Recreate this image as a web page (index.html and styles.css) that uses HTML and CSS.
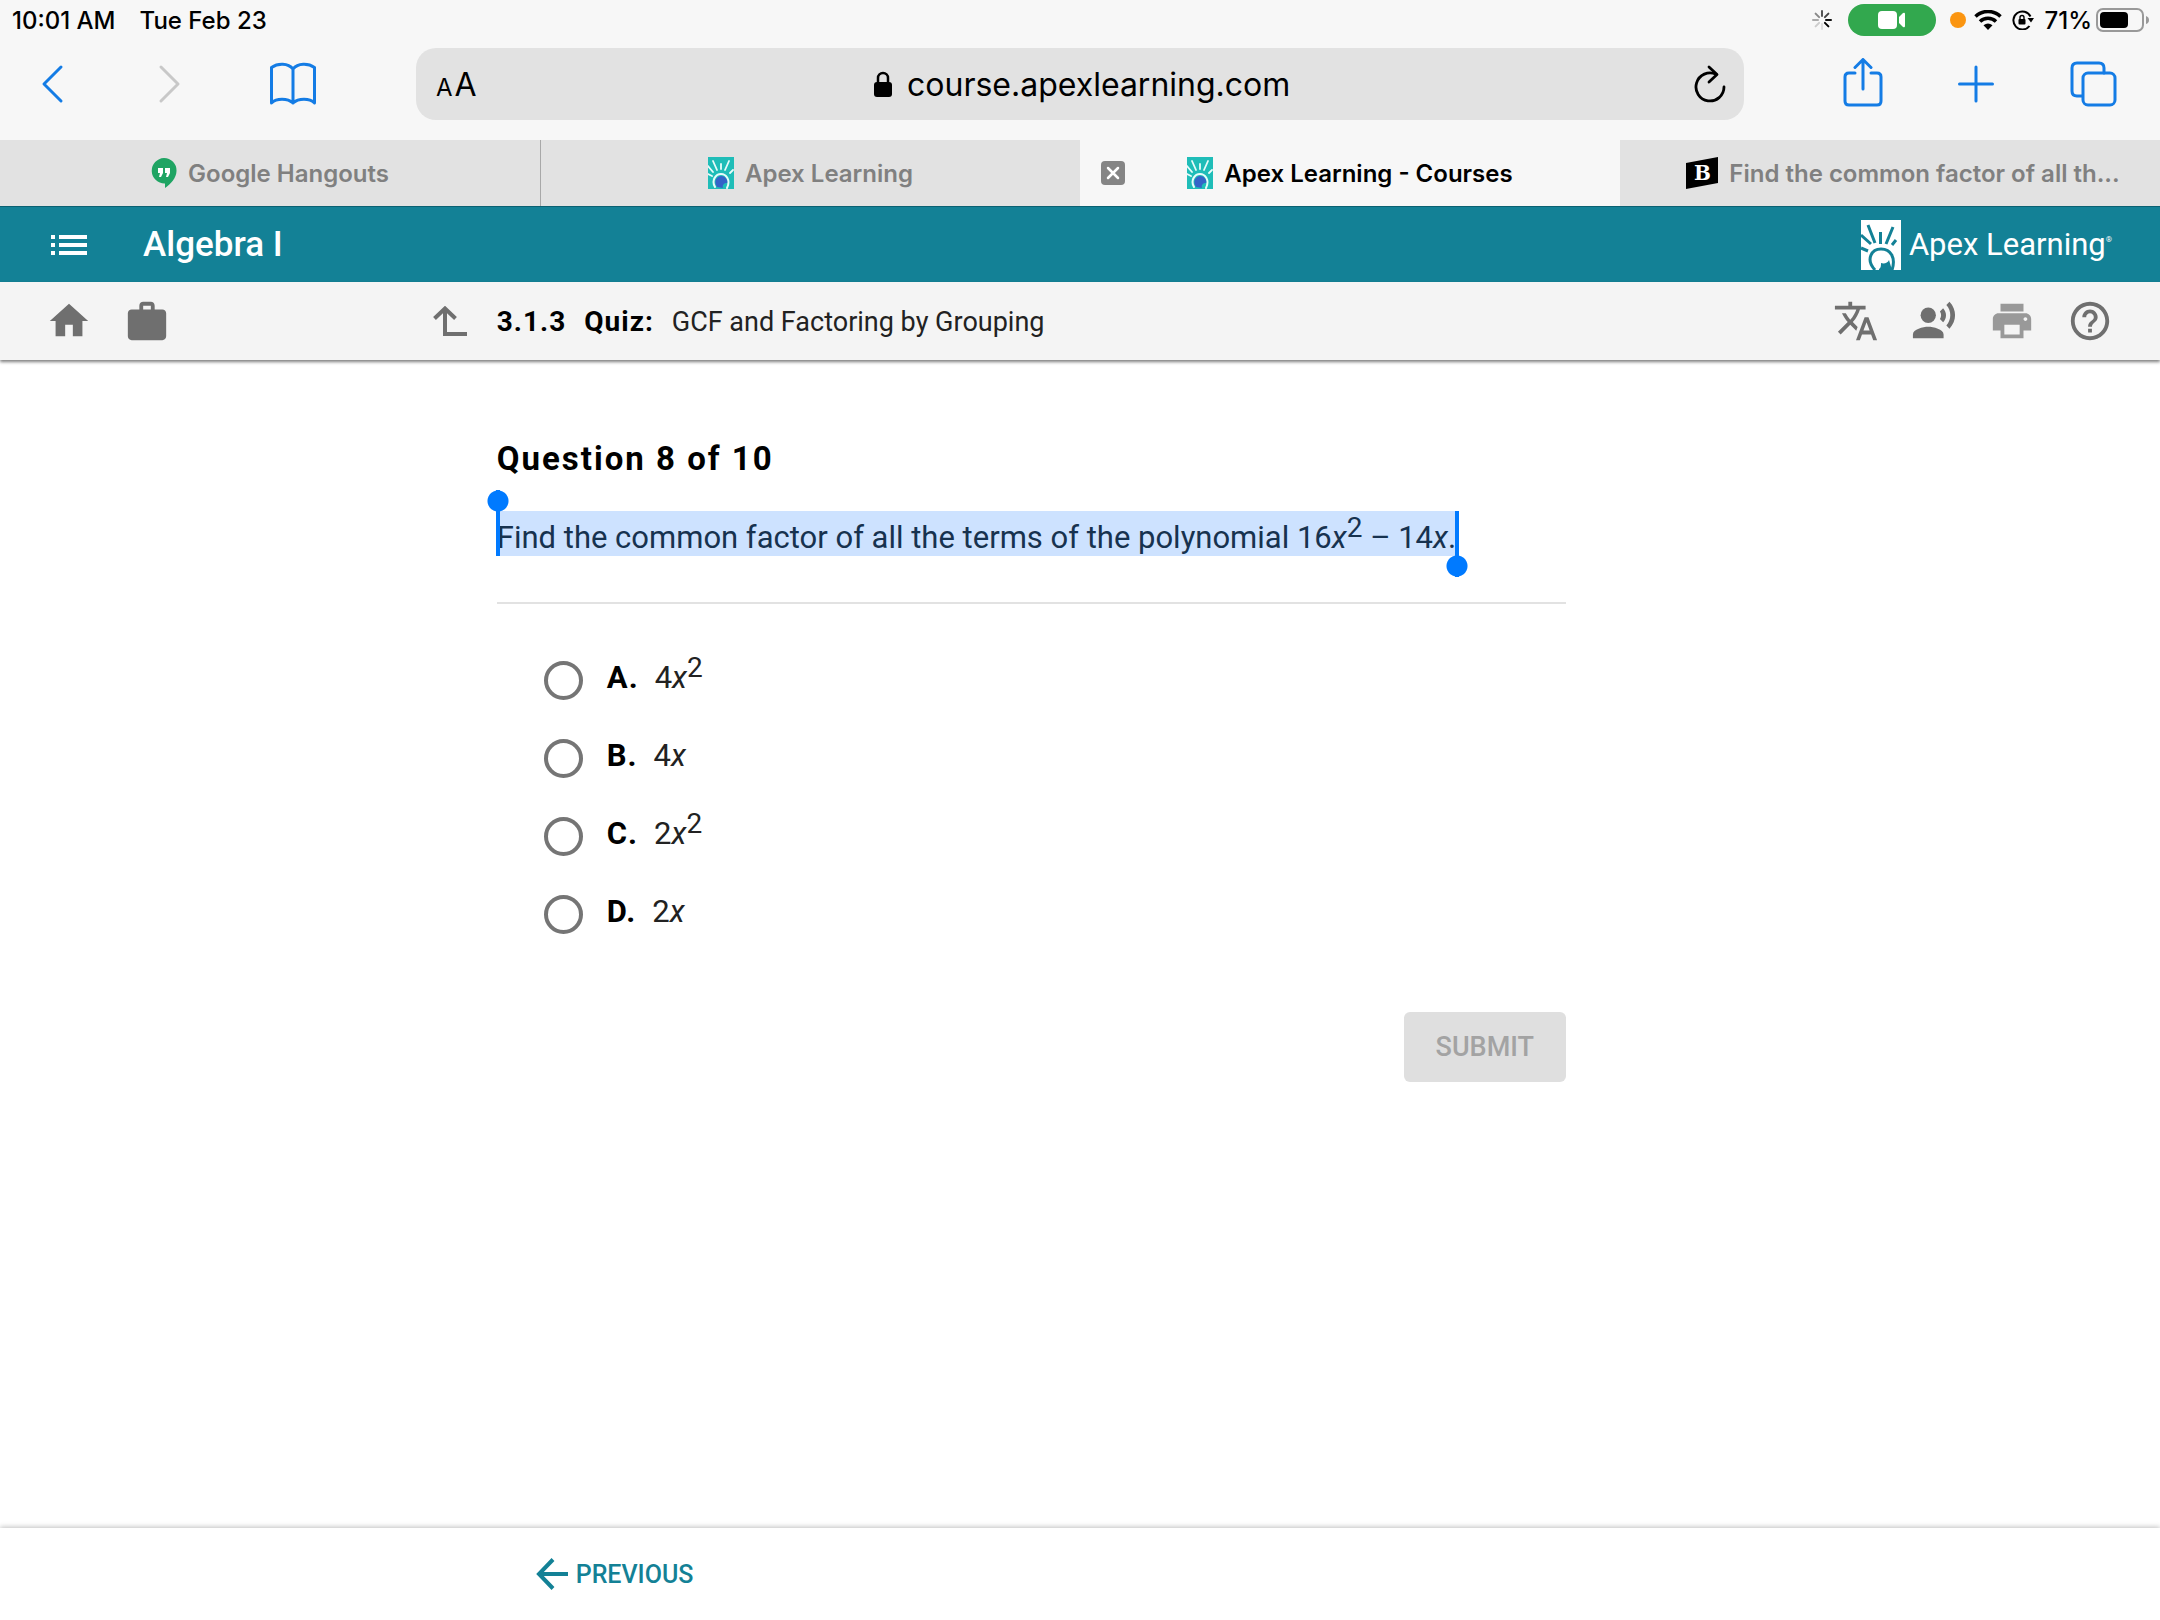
FILE: index.html
```html
<!DOCTYPE html>
<html lang="en">
<head>
    <meta charset="UTF-8">
    <meta name="viewport" content="width=device-width, initial-scale=1.0">
    <title>Apex Learning - Courses</title>
    <link rel="stylesheet" href="styles.css">
</head>
<body>
    <!-- shared symbols -->
    <svg class="symbols" aria-hidden="true">
        <symbol id="favicon" viewBox="0 0 26 32">
            <rect width="26" height="32" fill="#1fbdb8"/>
            <g stroke="#e8fbfa" stroke-width="1.8" stroke-linecap="round" fill="none">
                <path d="M5 4l4 9M13 7v5M21 4l-4 9M0 9l5 6M0 17l4 2M25 13l-3 3"/>
                <path d="M7 30c-4-7 1-13 6-13s10 6 6 14" stroke-width="2"/>
            </g>
            <path d="M9 30c-4-6 0-11 4-11 5 0 7 5 6 7-3 0-5 2-4 5z" fill="#3463c8"/>
        </symbol>
    </svg>

    <div class="browser">
        <div class="status">
            <span>10:01 AM</span>
            <span>Tue Feb 23</span>
            <div class="status-right">
                <svg class="spinner" viewBox="0 0 20 20" stroke-width="2" stroke-linecap="round">
                    <path d="M10 1v5" stroke="#555"/>
                    <path d="M16.400 3.600l-3.500 3.500" stroke="#444"/>
                    <path d="M19 10h-5" stroke="#111"/>
                    <path d="M16.400 16.400l-3.500-3.500" stroke="#000"/>
                    <path d="M10 19v-5" stroke="#ddd"/>
                    <path d="M3.600 16.400l3.500-3.500" stroke="#ccc"/>
                    <path d="M1 10h5" stroke="#aaa"/>
                    <path d="M3.600 3.600l3.500 3.500" stroke="#888"/>
                </svg>
                <span class="camera">
                    <svg width="28" height="18" viewBox="0 0 28 18" fill="#fff">
                        <rect width="19" height="18" rx="4"/>
                        <path d="M21 6l4-4q2-1 2 1v12q0 2-2 1l-4-4z"/>
                    </svg>
                </span>
                <span class="dot"></span>
                <svg class="wifi" viewBox="0 0 28 20" fill="none" stroke="#000">
                    <path d="M1.500 6.500a18 18 0 0 1 25 0" stroke-width="3.500"/>
                    <path d="M6 11.500a11.500 11.500 0 0 1 16 0" stroke-width="3.500"/>
                    <path d="M14 20l-4.500-4.800q4.500-3.400 9 0z" fill="#000" stroke="none"/>
                </svg>
                <svg class="rotation" viewBox="0 0 22 20" fill="none" stroke="#000" stroke-width="2">
                    <path d="M18.500 6.500a9 9 0 1 0-1 9.500"/>
                    <path d="M15.500 8h6.500l-3 4.500z" fill="#000" stroke="none"/>
                    <rect x="6.500" y="9" width="7" height="5.500" rx="1" fill="#000" stroke="none"/>
                    <path d="M8 9.500v-2a2 2 0 0 1 4 0v2" stroke-width="1.400"/>
                </svg>
                <span class="percent">71%</span>
                <svg class="battery" viewBox="0 0 54 24">
                    <rect x="1" y="1" width="46" height="22" rx="6" fill="none" stroke="#999" stroke-width="2"/>
                    <rect x="4" y="4" width="28" height="16" rx="4"/>
                    <path d="M50 8q3 1 3 4t-3 4z" fill="#999"/>
                </svg>
            </div>
        </div>

        <div class="toolbar">
            <div class="toolbar-left">
                <button class="tool" aria-label="Back">
                    <svg width="36" height="48" viewBox="0 0 36 48"><path d="M26 7L9 24l17 17"/></svg>
                </button>
                <button class="tool off" aria-label="Forward" disabled>
                    <svg width="36" height="48" viewBox="0 0 36 48"><path d="M9 7l17 17L9 41"/></svg>
                </button>
                <button class="tool" aria-label="Bookmarks">
                    <svg width="48" height="48" viewBox="0 0 48 48"><path d="M24 9C19 3 9 3 2.500 7.500V43c5-5 16-5 21.500 0 5.500-5 16.500-5 21.500 0V7.500C39 3 29 3 24 9zv34"/></svg>
                </button>
            </div>
            <div class="address">
                <button class="reader" aria-label="Reader options"><small>A</small>A</button>
                <div class="site">
                    <svg width="20" height="28" viewBox="0 0 20 28">
                        <rect x="1" y="12" width="18" height="15" rx="3"/>
                        <path d="M5 13V8a5 5 0 0 1 10 0v5" fill="none" stroke="#000" stroke-width="2.500"/>
                    </svg>
                    <input type="text" value="course.apexlearning.com" aria-label="Address">
                </div>
                <button class="reload" aria-label="Reload">
                    <svg width="32" height="38" viewBox="0 0 32 38" fill="none" stroke="#000" stroke-width="2.800" stroke-linecap="round" stroke-linejoin="round">
                        <path d="M30 22a14 14 0 1 1-8-12.700"/>
                        <path d="M15 2l8 7.500-8 7.500"/>
                    </svg>
                </button>
            </div>
            <div class="toolbar-right">
                <button class="tool" aria-label="Share">
                    <svg width="40" height="52" viewBox="0 0 40 52"><path d="M12 15H6q-4 0-4 4v24q0 4 4 4h28q4 0 4-4V19q0-4-4-4h-6M20 31V2M12 9.500L20 1.500l8 8"/></svg>
                </button>
                <button class="tool" aria-label="New tab">
                    <svg width="36" height="48" viewBox="0 0 36 48"><path d="M18 7v34M1.500 24h33"/></svg>
                </button>
                <button class="tool" aria-label="Show tabs">
                    <svg width="48" height="48" viewBox="0 0 48 48"><path d="M13 36H8q-5 0-5-5V8q0-5 5-5h22q5 0 5 5v5"/><rect x="14" y="13" width="32" height="32" rx="5"/></svg>
                </button>
            </div>
        </div>

        <div class="tabs">
            <a class="tab" href="#">
                <svg width="26" height="32" viewBox="0 0 26 32">
                    <path d="M13 1a12.500 12.500 0 0 1 12.500 13c0 7-6 13-11.500 17v-4.500A12.500 12.500 0 1 1 13 1z" fill="#1fa463"/>
                    <path d="M7 11h5v5l-2 4H8l1-4H7zM14 11h5v5l-2 4h-2l1-4h-2z" fill="#fff"/>
                </svg>
                <span>Google Hangouts</span>
            </a>
            <a class="tab" href="#">
                <svg width="26" height="32"><use href="#favicon"/></svg>
                <span>Apex Learning</span>
            </a>
            <div class="tab active">
                <button class="close" aria-label="Close tab">
                    <svg width="24" height="24" viewBox="0 0 24 24"><rect width="24" height="24" rx="4" fill="#858585"/><path d="M7 7l10 10M17 7L7 17" stroke="#fff" stroke-width="2.500" stroke-linecap="round"/></svg>
                </button>
                <svg width="26" height="32"><use href="#favicon"/></svg>
                <span>Apex Learning - Courses</span>
            </div>
            <a class="tab" href="#">
                <svg width="32" height="32" viewBox="0 0 32 32">
                    <path d="M0 6L32 0v26L0 32z"/>
                    <text class="brand-letter" x="8" y="23">B</text>
                </svg>
                <span>Find the common factor of all th...</span>
            </a>
        </div>
    </div>

    <header class="course">
        <button class="menu" aria-label="Course menu">
            <svg width="36" height="20" viewBox="0 0 36 20" fill="#fff"><path d="M0 0h4v4H0zM8 0h28v4H8zM0 8h4v4H0zM8 8h28v4H8zM0 16h4v4H0zM8 16h28v4H8z"/></svg>
        </button>
        <h1>Algebra I</h1>
        <a class="logo" href="#">
            <svg width="40" height="50" viewBox="0 0 40 50">
                <rect width="40" height="50" fill="#fff"/>
                <g fill="none" stroke="#138196" stroke-width="3">
                    <path d="M7 5l7 18M19.500 12v12M32 7l-7 17M0 15l10 9M0 28l7 3M35 20l-4 5"/>
                    <path d="M14 50C4 39 11 29 20 29c10 0 15 9 11 21"/>
                </g>
                <path d="M18 49c2-1 2-4 2-6 3 1 7 0 8-3l3 10H18z" fill="#138196"/>
            </svg>
            <span>Apex Learning</span><sup>®</sup>
        </a>
    </header>

    <nav class="activity">
        <div class="activity-left">
            <a href="#" aria-label="Home"><svg class="icon" viewBox="0 0 24 24"><path d="M10 20v-6h4v6h5v-8h3L12 3 2 12h3v8z"/></svg></a>
            <a href="#" aria-label="Portfolio"><svg class="icon" viewBox="0 0 24 24"><path d="M20 6h-4V4c0-1.110-.89-2-2-2h-4c-1.110 0-2 .89-2 2v2H4c-1.110 0-2 .89-2 2v12c0 1.110.89 2 2 2h16c1.110 0 2-.89 2-2V8c0-1.110-.89-2-2-2zm-6 0h-4V4h4v2z"/></svg></a>
            <a class="up" href="#" aria-label="Up one level"><svg width="34" height="30" viewBox="0 0 34 30" fill="none" stroke="#6f6f6f" stroke-width="4"><path d="M1.500 12.500L12 2.500l10.500 10M12 3v25h22"/></svg></a>
        </div>
        <p><b>3.1.3</b><b>Quiz:</b>GCF and Factoring by Grouping</p>
        <div class="activity-right">
            <button aria-label="Translate"><svg class="icon" viewBox="0 0 24 24"><path d="M12.870 15.070l-2.540-2.510.03-.03c1.740-1.940 2.980-4.170 3.710-6.530H17V4h-7V2H8v2H1v1.990h11.170C11.500 7.920 10.440 9.750 9 11.350 8.070 10.320 7.300 9.190 6.690 8h-2c.73 1.630 1.730 3.170 2.980 4.560l-5.090 5.020L4 19l5-5 3.110 3.110.76-2.040zM18.500 10h-2L12 22h2l1.120-3h4.750L21 22h2l-4.500-12zm-2.620 7l1.620-4.330L19.120 17h-3.240z"/></svg></button>
            <button aria-label="Read aloud"><svg class="icon" viewBox="0 0 24 24"><circle cx="9" cy="9" r="4"/><path d="M9 15c-2.670 0-8 1.340-8 4v2h16v-2c0-2.660-5.330-4-8-4zm7.760-9.640l-1.680 1.690c.84 1.180.84 2.710 0 3.890l1.680 1.690c2.020-2.020 2.020-5.070 0-7.270zM20.070 2l-1.630 1.630c2.770 3.020 2.770 7.560 0 10.740L20.070 16c3.900-3.890 3.910-9.950 0-14z"/></svg></button>
            <button class="faded" aria-label="Print"><svg class="icon" viewBox="0 0 24 24"><path d="M19 8H5c-1.660 0-3 1.340-3 3v6h4v4h12v-4h4v-6c0-1.660-1.340-3-3-3zm-3 11H8v-5h8v5zm3-7c-.55 0-1-.45-1-1s.45-1 1-1 1 .45 1 1-.45 1-1 1zm-1-9H6v4h12V3z"/></svg></button>
            <button aria-label="Help"><svg class="icon" viewBox="0 0 24 24"><path d="M11 18h2v-2h-2v2zm1-16C6.480 2 2 6.480 2 12s4.480 10 10 10 10-4.480 10-10S17.520 2 12 2zm0 18c-4.410 0-8-3.590-8-8s3.590-8 8-8 8 3.590 8 8-3.590 8-8 8zm0-14c-2.210 0-4 1.790-4 4h2c0-1.100.9-2 2-2s2 .9 2 2c0 2-3 1.750-3 5h2c0-2.250 3-2.500 3-5 0-2.210-1.790-4-4-4z"/></svg></button>
        </div>
    </nav>

    <main>
        <h2>Question 8 of 10</h2>
        <p class="question"><span class="selected">Find the common factor of all the terms of the polynomial 16<i>x</i><sup>2</sup> – 14<i>x</i>.</span></p>
        <hr>
        <form>
            <div class="option">
                <input type="radio" name="answer" id="answerA">
                <label for="answerA"><b>A.</b>4<i>x</i><sup>2</sup></label>
            </div>
            <div class="option">
                <input type="radio" name="answer" id="answerB">
                <label for="answerB"><b>B.</b>4<i>x</i></label>
            </div>
            <div class="option">
                <input type="radio" name="answer" id="answerC">
                <label for="answerC"><b>C.</b>2<i>x</i><sup>2</sup></label>
            </div>
            <div class="option">
                <input type="radio" name="answer" id="answerD">
                <label for="answerD"><b>D.</b>2<i>x</i></label>
            </div>
            <button class="submit" type="submit" disabled>SUBMIT</button>
        </form>
    </main>

    <footer>
        <a href="#">
            <svg width="32" height="32" viewBox="0 0 32 32" fill="none" stroke="#138196" stroke-width="4"><path d="M17 1.500L3 16l14 14.500M3 16h29"/></svg>
            <span>PREVIOUS</span>
        </a>
    </footer>
</body>
</html>
```
FILE: styles.css
```css
* {
    box-sizing: border-box;
}
body {
    display: flex;
    flex-direction: column;
    min-height: 100vh;
    margin: 0;
    background-color: #fff;
    color: #222;
    font-family: Roboto, "Liberation Sans", sans-serif;
}
button {
    padding: 0;
    border: none;
    background: none;
    color: inherit;
    font-family: inherit;
}
a {
    color: inherit;
    text-decoration: none;
}
svg {
    display: block;
    flex: none;
}
h1, h2, p {
    margin: 0;
}
sup {
    font-size: 28px;
    line-height: 0;
}
.symbols {
    position: absolute;
    width: 0;
    height: 0;
}

/* browser chrome */
.browser {
    background-color: #f7f7f7;
    color: #000;
    font-family: Inter, "Liberation Sans", sans-serif;
}
.status {
    display: flex;
    align-items: center;
    gap: 24px;
    height: 40px;
    padding: 0 10px 0 12px;
    font-size: 24px;
    font-weight: 500;
}
.status-right {
    display: flex;
    align-items: center;
    margin-left: auto;
}
.spinner {
    width: 20px;
    height: 20px;
    margin-right: 16px;
}
.camera {
    display: flex;
    align-items: center;
    justify-content: center;
    width: 88px;
    height: 32px;
    border-radius: 16px;
    background-color: #32a84e;
}
.dot {
    width: 16px;
    height: 16px;
    margin: 0 8px 0 14px;
    border-radius: 50%;
    background-color: #fb9510;
}
.wifi {
    width: 28px;
    height: 20px;
}
.rotation {
    width: 22px;
    height: 20px;
    margin: 0 10px;
}
.percent {
    margin-right: 4px;
}
.battery {
    width: 54px;
    height: 24px;
}
.toolbar {
    display: grid;
    grid-template-columns: 416px 1fr 416px;
    align-items: center;
    height: 100px;
    padding-bottom: 12px;
}
.toolbar-left,
.toolbar-right {
    display: flex;
    align-items: center;
}
.toolbar-left {
    gap: 81px;
    padding-left: 35px;
}
.toolbar-right {
    justify-content: flex-end;
    gap: 75px;
    padding-right: 43px;
}
.tool svg {
    fill: none;
    stroke: #147ce5;
    stroke-width: 3;
    stroke-linecap: round;
    stroke-linejoin: round;
}
.off svg {
    stroke: #c8c8c8;
}
.address {
    display: grid;
    grid-template-columns: 1fr auto 1fr;
    align-items: center;
    height: 72px;
    padding: 0 18px 0 20px;
    border-radius: 20px;
    background-color: #e2e2e2;
}
.reader {
    justify-self: start;
    font-size: 32px;
}
.reader small {
    margin-right: 2px;
    font-size: 24px;
}
.site {
    display: flex;
    align-items: center;
    gap: 14px;
}
.site input {
    width: 382px;
    padding: 0;
    border: none;
    background: none;
    font-family: inherit;
    font-size: 32px;
}
.reload {
    justify-self: end;
}
.tabs {
    display: grid;
    grid-template-columns: repeat(4, 1fr);
}
.tab {
    position: relative;
    display: flex;
    align-items: center;
    justify-content: center;
    gap: 11px;
    height: 66px;
    background-color: #e2e2e2;
    color: #808080;
    font-size: 24px;
    font-weight: 600;
    white-space: nowrap;
}
.tab:nth-child(2) {
    border-left: 1px solid #a8a8a8;
}
.tab:last-child {
    padding-left: 26px;
}
.tab.active {
    background-color: #f7f7f7;
    color: #000;
}
.close {
    position: absolute;
    left: 21px;
}
.brand-letter {
    fill: #fff;
    font-family: "DejaVu Serif", serif;
    font-size: 20px;
    font-weight: bold;
}

/* course header */
.course {
    display: flex;
    align-items: center;
    height: 76px;
    padding: 0 48px 0 51px;
    border-top: 1px solid #0b6172;
    background-color: #138196;
    color: #fff;
}
.course h1 {
    margin-left: 56px;
    font-size: 35px;
    font-weight: 500;
}
.logo {
    display: flex;
    align-items: center;
    margin-left: auto;
    font-size: 31px;
}
.logo span {
    margin-left: 8px;
}
.logo sup {
    align-self: flex-start;
    padding-top: 20px;
    font-size: 8px;
}

/* activity bar */
.activity {
    display: grid;
    grid-template-columns: 23% 1fr auto;
    align-items: center;
    height: 78px;
    background-color: #f4f4f4;
    box-shadow: 0 2px 3px rgba(0, 0, 0, 0.5);
}
.activity-left {
    display: flex;
    align-items: center;
    gap: 32px;
    padding: 0 30px 0 46px;
}
.up {
    margin-left: auto;
}
.activity p {
    font-size: 27px;
}
.activity b {
    margin-right: 18px;
    color: #000;
    font-size: 28px;
    letter-spacing: 1px;
}
.activity-right {
    display: flex;
    gap: 32px;
    padding-right: 47px;
}
.icon {
    width: 46px;
    height: 46px;
    fill: #6f6f6f;
}
.faded .icon {
    fill: #999;
}

/* question */
main {
    flex: 1;
    padding: 79px 27.5% 0 23%;
}
h2 {
    color: #000;
    font-size: 33px;
    line-height: 40px;
    letter-spacing: 2px;
}
.question {
    margin: 32px 0 46px;
    font-size: 31px;
    line-height: 37px;
}
.selected {
    position: relative;
    display: inline-block;
    padding: 8px 2px 0 0;
    background-color: #cde2ff;
    color: #17324f;
}
.selected::before,
.selected::after {
    content: "";
    position: absolute;
    width: 22px;
    height: 66px;
    background:
        radial-gradient(circle at center 11px, #007aff 10px, transparent 11px),
        linear-gradient(#007aff, #007aff) center / 4px 100% no-repeat;
}
.selected::before {
    left: -10px;
    bottom: 0;
}
.selected::after {
    top: 0;
    right: -10px;
    transform: rotate(180deg);
}
hr {
    height: 2px;
    margin: 0;
    border: none;
    background-color: #e2e2e2;
}
form {
    display: flex;
    flex-direction: column;
    gap: 32px;
    padding-top: 53px;
}
.option {
    display: flex;
    align-items: center;
    gap: 24px;
    height: 46px;
    padding-left: 47px;
}
.option input {
    appearance: none;
    width: 39px;
    height: 39px;
    margin: 0;
    border: 4px solid #757575;
    border-radius: 50%;
}
.option label {
    padding-bottom: 5px;
    font-size: 31px;
}
.option b {
    margin-right: 16px;
    color: #000;
    letter-spacing: 1px;
}
.submit {
    align-self: flex-end;
    height: 70px;
    margin-top: 43px;
    padding: 0 32px;
    border-radius: 6px;
    background-color: #dfdfdf;
    color: #a3a3a3;
    font-size: 27px;
    font-weight: 500;
}

/* bottom navigation */
footer {
    display: flex;
    align-items: center;
    height: 92px;
    padding-left: 24.8%;
    box-shadow: 0 -1px 5px rgba(0, 0, 0, 0.25);
    color: #138196;
    font-size: 25px;
    font-weight: 500;
}
footer a {
    display: flex;
    align-items: center;
    gap: 8px;
}
```
